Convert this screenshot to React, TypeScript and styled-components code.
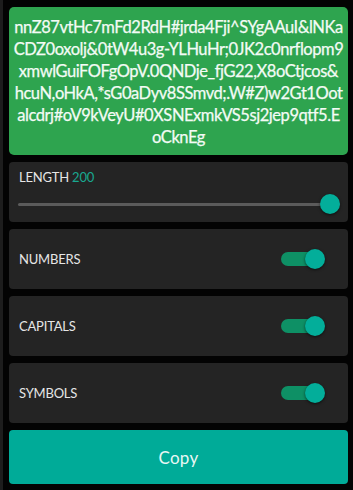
import { useState } from "react"
import styled, { createGlobalStyle } from "styled-components"

const GlobalStyle = createGlobalStyle`
  html, body {
    margin: 0;
    padding: 0;
    background: #030303;
  }
  * {
    box-sizing: border-box;
  }
`

// the generated password, split the way it wraps in the box
const passwordLines = [
  "nnZ87vtHc7mFd2RdH#jrda4Fji^SYgAAuI&lNKa",
  "CDZ0oxolj&0tW4u3g-YLHuHr;0JK2c0nrflopm9",
  "xmwlGuiFOFgOpV.0QNDje_fjG22,X8oCtjcos&",
  "hcuN,oHkA,*sG0aDyv8SSmvd;.W#Z)w2Gt1Oot",
  "alcdrj#oV9kVeyU#0XSNExmkVS5sj2jep9qtf5.E",
  "oCknEg",
]

type Option = "numbers" | "capitals" | "symbols"

function App() {
  const [length, setLength] = useState(200)
  const [opts, setOpts] = useState<Record<Option, boolean>>({
    numbers: true,
    capitals: true,
    symbols: true,
  })

  const toggle = (key: Option) => setOpts({ ...opts, [key]: !opts[key] })

  return <RootStyle>
    <GlobalStyle />
    <Output>
      {passwordLines.map((line, i) => <Line key={i}>{line}</Line>)}
    </Output>
    <Card>
      <Label>
        LENGTH <Value>{length}</Value>
      </Label>
      <Range
        type="range"
        min={8}
        max={200}
        value={length}
        onChange={(e) => setLength(Number(e.target.value))}
      />
    </Card>
    {(["numbers", "capitals", "symbols"] as Option[]).map((key) => (
      <OptionRow key={key}>
        <Label>{key.toUpperCase()}</Label>
        <Switch $on={opts[key]} onClick={() => toggle(key)}>
          <span />
        </Switch>
      </OptionRow>
    ))}
    <CopyButton>Copy</CopyButton>
  </RootStyle>
}

export default App

const RootStyle = styled.div`
  width: 353px;
  height: 490px;
  border-left: 3px solid #1d1d1d;
  padding: 7px 5px 0 6px;
  display: flex;
  flex-direction: column;
  gap: 7px;
  font-family: Lato, "Open Sans", sans-serif;
`

const Output = styled.div`
  height: 148px;
  background: #2ea44f;
  border-radius: 5px;
  padding: 9px 2px;
  color: #f3fbf5;
  font-size: 16.5px;
  letter-spacing: -0.45px;
  line-height: 22px;
  text-align: center;
  overflow: hidden;
  -webkit-text-stroke: 0.25px #f3fbf5;
`

const Line = styled.div`
  white-space: nowrap;
`

const Card = styled.div`
  height: 60px;
  background: #242424;
  border-radius: 4px;
  padding: 7px 8px 0 9px;
  display: flex;
  flex-direction: column;
  gap: 9px;
`

const Label = styled.div`
  color: #e6e6e6;
  font-size: 13px;
  padding-left: 1px;
  letter-spacing: -0.2px;
`

const Value = styled.span`
  color: #19a890;
`

const Range = styled.input`
  -webkit-appearance: none;
  appearance: none;
  width: 100%;
  height: 20px;
  margin: 0;
  background: transparent;

  &::-webkit-slider-runnable-track {
    height: 3px;
    background: #5b5b5b;
    border-radius: 2px;
  }
  &::-webkit-slider-thumb {
    -webkit-appearance: none;
    width: 20px;
    height: 20px;
    margin-top: -8.5px;
    border-radius: 50%;
    background: #03ae9a;
    box-shadow: 0 1px 3px rgba(0, 0, 0, 0.6);
  }
`

const OptionRow = styled.div`
  height: 60px;
  background: #242424;
  border-radius: 4px;
  padding: 0 23px 0 9px;
  display: flex;
  align-items: center;
  justify-content: space-between;
`

const Switch = styled.div<{ $on: boolean }>`
  position: relative;
  width: 44px;
  height: 20px;
  cursor: pointer;

  &::before {
    content: "";
    position: absolute;
    left: 0;
    top: 3px;
    width: 38px;
    height: 14px;
    border-radius: 7px;
    background: ${(p) => (p.$on ? "#0e9065" : "#555")};
  }
  & > span {
    position: absolute;
    top: 0;
    left: ${(p) => (p.$on ? "24px" : "0")};
    width: 20px;
    height: 20px;
    border-radius: 50%;
    background: ${(p) => (p.$on ? "#03ae9a" : "#bbb")};
    box-shadow: 0 1px 3px rgba(0, 0, 0, 0.6);
  }
`

const CopyButton = styled.button`
  height: 54px;
  border: none;
  border-radius: 4px;
  background: #00ab98;
  color: #e9f7f4;
  font-family: Lato, "Open Sans", sans-serif;
  font-size: 17px;
  letter-spacing: 0.3px;
  cursor: pointer;
`
